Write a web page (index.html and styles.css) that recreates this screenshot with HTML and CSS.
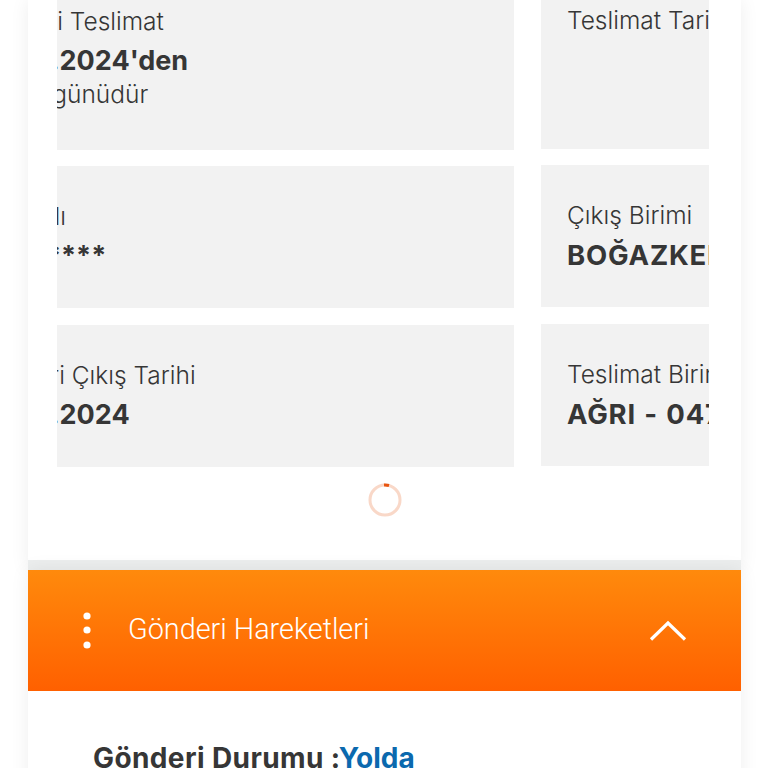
FILE: index.html
```html
<!DOCTYPE html>
<html lang="tr">
<head>
<meta charset="utf-8">
<title>Gönderi Takip</title>
<link rel="stylesheet" href="styles.css">
</head>
<body>
<main class="page">
  <section class="card details">
    <div class="scroller">
      <div class="track">
        <div class="column column-left">
          <div class="cell cell-first">
            <span class="label">Tahmini Teslimat</span>
            <strong class="value">15.03.2024'den</strong>
            <span class="label note">Teslim günüdür</span>
          </div>
          <div class="cell cell-mid">
            <span class="label">Sigortalı</span>
            <strong class="value value-masked">A*******</strong>
          </div>
          <div class="cell cell-mid cell-last">
            <span class="label">Gönderi Çıkış Tarihi</span>
            <strong class="value">15.03.2024</strong>
          </div>
        </div>
        <div class="column column-right">
          <div class="cell cell-first">
            <span class="label">Teslimat Tarihi</span>
          </div>
          <div class="cell cell-mid">
            <span class="label">Çıkış Birimi</span>
            <strong class="value value-caps">BOĞAZKENT</strong>
          </div>
          <div class="cell cell-mid cell-last">
            <span class="label">Teslimat Birimi</span>
            <strong class="value value-caps">AĞRI - 0472</strong>
          </div>
        </div>
      </div>
    </div>
    <div class="spinner-row">
      <svg class="spinner" width="34" height="34" viewBox="0 0 34 34" aria-hidden="true">
        <circle cx="17" cy="17" r="15" fill="none" stroke="#f9d8c8" stroke-width="3"/>
        <path d="M16 2 A15 15 0 0 1 21 2.5" fill="none" stroke="#e8540f" stroke-width="3"/>
      </svg>
    </div>
  </section>

  <section class="card movements">
    <header class="bar">
      <svg class="dots" width="8" height="38" viewBox="0 0 8 38" aria-hidden="true">
        <circle cx="4" cy="4" r="3.6" fill="#fff"/>
        <circle cx="4" cy="18" r="3.6" fill="#fff"/>
        <circle cx="4" cy="33" r="3.6" fill="#fff"/>
      </svg>
      <h2 class="bar-title">Gönderi Hareketleri</h2>
      <svg class="chevron" width="38" height="22" viewBox="0 0 38 22" aria-hidden="true">
        <path d="M2 19.5 L19 3 L36 19.5" fill="none" stroke="#fff" stroke-width="3.2"/>
      </svg>
    </header>
    <div class="status-body">
      <p class="status">Gönderi Durumu :<span class="status-value">Yolda</span></p>
    </div>
  </section>
</main>
</body>
</html>
```
FILE: styles.css
```css
* { box-sizing: border-box; }

html, body {
  margin: 0;
  height: 768px;
  overflow: hidden;
  background: #fff;
}

body {
  font-family: Inter, "Noto Sans", sans-serif;
  color: #363636;
}

.page {
  padding: 0 27px 0 28px;
  display: flex;
  flex-direction: column;
}

.card {
  background: #fff;
  box-shadow: 0 0 18px rgba(0, 0, 0, 0.07);
}

.details {
  height: 570px;
  padding: 0 32px 0 29px;
  border-bottom: 10px solid #eceeee;
  display: flex;
  flex-direction: column;
}

.scroller {
  overflow: hidden;
  height: 467px;
}

.track {
  display: flex;
  gap: 27px;
  margin-left: -108px;
  width: 1000px;
}

.column {
  display: flex;
  flex-direction: column;
  flex: none;
  gap: 16px;
}

.column-left { width: 565px; }
.column-right { width: 400px; margin-top: -1px; }

.cell {
  background: #f2f2f2;
  padding: 0 26px;
  display: flex;
  flex-direction: column;
  justify-content: center;
  height: 142px;
}

.column-left .cell { padding-left: 25px; }
.cell-mid { padding-top: 2px; }
.cell-last { margin-top: 1px; }

.cell-first {
  height: 150px;
  justify-content: flex-start;
  padding-top: 5px;
}

.label {
  font-size: 24.5px;
  line-height: 32px;
  font-weight: 300;
  white-space: nowrap;
}

.note {
  margin: -3px 0 0 -2px;
}

.value {
  margin-top: 4px;
  font-size: 27.5px;
  line-height: 40px;
  font-weight: 700;
  white-space: nowrap;
}

.column-left .value {
  margin-left: 5px;
  font-size: 27px;
}

.column-left .value-masked { margin-left: 9px; }

.value-caps {
  letter-spacing: 0.8px;
  word-spacing: 1px;
}

.spinner-row {
  display: flex;
  justify-content: center;
  padding: 16px 0 0 3px;
}

.spinner { display: block; }

.movements { height: 400px; }

.bar {
  height: 121px;
  padding: 0 54px 0 55px;
  display: flex;
  align-items: center;
  background: linear-gradient(#ff8a0c, #ff6000);
}

.dots { flex: none; }

.bar-title {
  margin: 0 0 3px 37px;
  flex: 1;
  font-family: Roboto, sans-serif;
  font-size: 28.8px;
  font-weight: 300;
  color: #fff;
}

.chevron { flex: none; }

.status-body { padding: 49px 65px; }

.status {
  margin: 0;
  font-size: 28px;
  line-height: 36px;
  font-weight: 700;
  letter-spacing: 0.4px;
}

.status-value {
  color: #0b69ae;
  margin-left: -2px;
  letter-spacing: 0;
}
```
